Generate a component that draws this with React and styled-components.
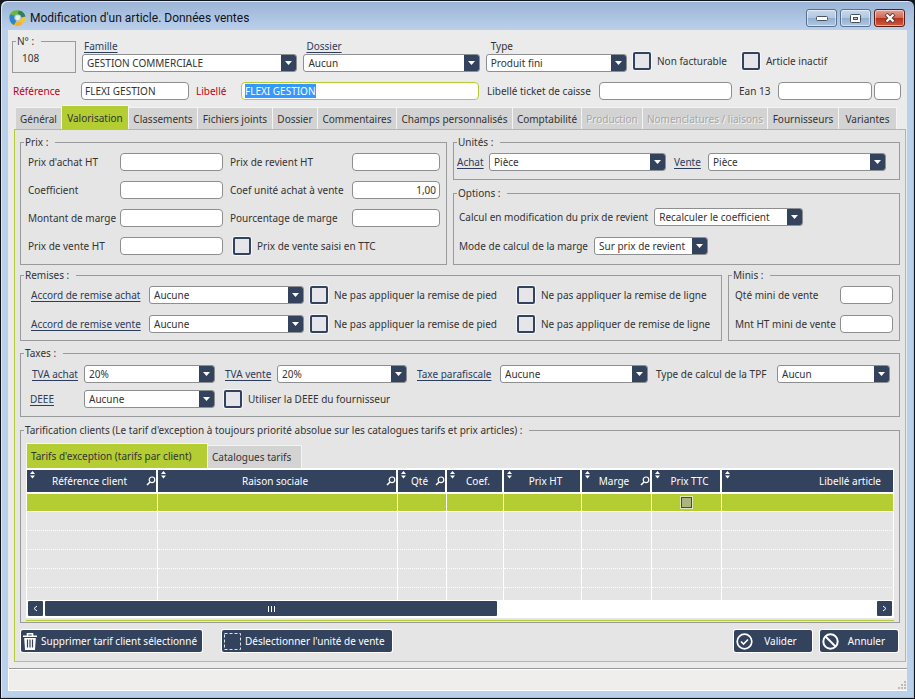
import React, { useEffect, useRef } from 'react';
import styled, { createGlobalStyle, css } from 'styled-components';

const navy = '#33425d';
const green = '#b4cd33';
const ink = '#333333';
const line = '#999a9c';

const GlobalStyle = createGlobalStyle`
  *, *::before, *::after { box-sizing: border-box; }
  body {
    margin: 0;
    background: #16181d;
    color: ${ink};
    font-family: "Noto Sans", "Open Sans", sans-serif;
    font-size: 10px;
    line-height: 14px;
  }
  button, input, select { font: inherit; color: inherit; margin: 0; }
  ::selection { background: #3399ff; color: #ffffff; }
`;

/* ---------- window frame ---------- */

const Window = styled.div`
  display: flex;
  flex-direction: column;
  min-height: 100vh;
  padding: 0 7px 7px;
  border: 1px solid #10131a;
  border-radius: 7px 7px 0 0;
  background: linear-gradient(#9ab4d6 0, #bbd0ea 29px, #bad1ec 60px, #bad1ec 100%);
  box-shadow: inset 1px 1px 0 #dbe9f7, inset -1px -1px 0 #74d4f5;
`;

const TitleBar = styled.header`
  display: flex;
  align-items: center;
  height: 29px;
  padding: 5px 2px 0 1px;
  gap: 3px;
`;

const Title = styled.h1`
  flex: 1;
  margin: 0;
  padding-left: 1px;
  font-family: Roboto, "Noto Sans", sans-serif;
  font-size: 12px;
  font-weight: 400;
  line-height: 16px;
  color: #10131a;
`;

const WindowButton = styled.button`
  display: grid;
  place-items: center;
  width: 31px;
  height: 18px;
  padding: 0;
  border: 1px solid ${p => (p.$close ? '#5f1d17' : '#56708f')};
  border-radius: 3px;
  background: ${p =>
    p.$close
      ? 'linear-gradient(#e2a093 0, #d06a58 48%, #b8321c 52%, #cf5b3c 100%)'
      : 'linear-gradient(#c6d8ec 0, #b2c8e0 48%, #94afcd 52%, #afc8e3 100%)'};
  box-shadow: inset 0 0 0 1px rgba(255, 255, 255, 0.5);
`;

const Client = styled.main`
  flex: 1;
  display: flex;
  flex-direction: column;
  background: #ebebeb;
`;

/* ---------- shared controls ---------- */

const Link = styled.a`
  justify-self: start;
  color: #2c3c5c;
  text-decoration: underline;
  text-underline-offset: 2px;
  white-space: nowrap;
`;

const Label = styled.label`
  padding-left: ${p => p.$pad || 0}px;
  white-space: nowrap;
  color: ${p => (p.$required ? '#c00018' : ink)};
`;

const LinkCell = styled.span`
  padding-left: ${p => p.$pad || 0}px;
  white-space: nowrap;
`;

const TextInput = styled.input`
  width: 100%;
  min-width: 0;
  height: 18px;
  padding: 0 3px;
  border: 1px solid ${p => (p.$active ? green : '#8d8e90')};
  border-radius: 4px;
  background: #ffffff;
  text-align: ${p => (p.$right ? 'right' : 'left')};
  outline: none;
`;

const SelectFrame = styled.span`
  position: relative;
  display: flex;
  min-width: 0;
  height: 18px;
  width: ${p => (p.$width ? `${p.$width}px` : '100%')};
  border: 1px solid #8d8e90;
  border-radius: 3px;
  background: #ffffff;
  overflow: hidden;
`;

const NativeSelect = styled.select`
  flex: 1;
  min-width: 0;
  padding: 0 18px 0 4px;
  border: 0;
  background: transparent;
  appearance: none;
  outline: none;
`;

const SelectArrow = styled.span`
  position: absolute;
  inset: 0 0 0 auto;
  width: 15px;
  display: grid;
  place-items: center;
  background: ${navy};
  pointer-events: none;
`;

const CheckLabel = styled.label`
  display: flex;
  align-items: center;
  gap: 6px;
  height: 18px;
  padding-left: ${p => p.$pad || 0}px;
  white-space: nowrap;
  ${p => p.$span && css`grid-column: span ${p.$span};`}
`;

const CheckInput = styled.input`
  appearance: none;
  flex: none;
  width: 18px;
  height: 18px;
  border: 2px solid ${navy};
  border-radius: 2px;
  background: #e6e6ea;
  box-shadow: 0 0 0 1px #f6f6f8;
`;

const Group = styled.fieldset`
  display: block;
  min-width: 0;
  margin: 0;
  padding: 0;
  border: 1px solid ${line};
`;

const Legend = styled.legend`
  margin-left: 3px;
  padding: 0 7px 0 1px;
  white-space: nowrap;
`;

function Select({ id, value, label, width }) {
  return (
    <SelectFrame $width={width}>
      <NativeSelect id={id} aria-label={label} defaultValue={value}>
        <option>{value}</option>
      </NativeSelect>
      <SelectArrow>
        <svg width="7" height="4" viewBox="0 0 7 4" aria-hidden="true">
          <path d="M0 0h7L3.5 4z" fill="#fff" />
        </svg>
      </SelectArrow>
    </SelectFrame>
  );
}

function Check({ children, pad, span }) {
  return (
    <CheckLabel $pad={pad} $span={span}>
      <CheckInput type="checkbox" />
      {children}
    </CheckLabel>
  );
}

/* ---------- article header ---------- */

const IdentityRow = styled.section`
  display: grid;
  grid-template-columns: 64px 215fr 176fr 141fr 103px 159px;
  column-gap: 6px;
  align-items: end;
  padding: 4px 6px 0 4px;
`;

const NumberGroup = styled(Group)`
  height: 39px;
`;

const NumberValue = styled.output`
  display: block;
  padding: 3px 9px 0;
`;

const StackedField = styled.div`
  display: grid;
  row-gap: 1px;
  padding-bottom: 1px;
`;

const StackedCaption = styled.span`
  padding-left: ${p => p.$pad}px;
`;

const CheckCell = styled.div`
  padding-bottom: 3px;
`;

const NamingRow = styled.section`
  display: grid;
  grid-template-columns: 68px 108px 52px 238fr 120px 133fr 46px 94fr 29px;
  align-items: center;
  padding: 9px 6px 0 5px;
`;

const ShortCell = styled.div`
  padding-left: 2px;
`;

/* ---------- tabs ---------- */

const Tabs = styled.nav`
  display: grid;
  grid-template-columns: 46fr 67fr 69fr 75fr 45fr 79fr 116fr 69fr 61fr 125fr 71fr 58fr;
  align-items: end;
  padding: 5px 10px 0 8px;
`;

const Tab = styled.button`
  min-width: 0;
  height: ${p => (p.$active ? 24 : 22)}px;
  padding: 0;
  border: solid #f4f4f4;
  border-width: 1px 1px 0 0;
  background: ${p => (p.$active ? green : '#d3d3d3')};
  white-space: nowrap;

  &:disabled {
    color: #a6a6a6;
    text-shadow: 1px 1px 0 #f4f4f4;
  }
`;

const Panel = styled.section`
  margin: 0 1px 0 6px;
  padding: 5px 5px 8px;
  border: 1px solid ${green};
  background: #e5e5e5;
`;

/* ---------- panel groups ---------- */

const PricingRow = styled.div`
  display: grid;
  grid-template-columns: 427fr 447fr;
  column-gap: 6px;
`;

const RightStack = styled.div`
  display: grid;
  row-gap: 6px;
`;

const PriceGrid = styled.div`
  display: grid;
  grid-template-columns: 92px 103fr 129px 88fr;
  row-gap: 10px;
  align-items: center;
  padding: 4px 6px 9px 7px;
`;

const UnitGrid = styled.div`
  display: grid;
  grid-template-columns: 32px 177fr 42px 178fr;
  align-items: center;
  padding: 4px 13px 8px 3px;
`;

const OptionList = styled.div`
  display: grid;
  row-gap: 11px;
  padding: 8px 5px 9px;
`;

const OptionRow = styled.div`
  display: flex;
  align-items: center;
  gap: 6px;
`;

const DiscountRow = styled.div`
  display: grid;
  grid-template-columns: minmax(0, 1fr) 172px;
  column-gap: 6px;
  margin-top: 3px;
`;

const DiscountGrid = styled.div`
  display: grid;
  grid-template-columns: 118px 1fr 213px 202px;
  row-gap: 11px;
  align-items: center;
  padding: 4px 2px 7px 10px;
`;

const MinimumGrid = styled.div`
  display: grid;
  grid-template-columns: 105px 1fr;
  row-gap: 11px;
  align-items: center;
  padding: 4px 6px 7px;
`;

const TaxGroup = styled(Group)`
  margin-top: 5px;
`;

const TaxGrid = styled.div`
  display: grid;
  grid-template-columns: 54px 131fr 62px 130fr 93px 148fr 129px 113fr;
  row-gap: 7px;
  align-items: center;
  padding: 5px 9px 8px;
`;

const TariffGroup = styled(Group)`
  margin-top: 6px;
`;

const TariffBody = styled.div`
  padding: 6px 5px 1px;
`;

const SubTabs = styled.div`
  display: flex;
  align-items: flex-end;
`;

const SubTab = styled(Tab)`
  width: ${p => (p.$active ? 182 : 94)}px;
  height: ${p => (p.$active ? 25 : 23)}px;
  padding-left: 4px;
  border-left-width: ${p => (p.$active ? 1 : 0)}px;
  text-align: left;
`;

/* ---------- tariff table ---------- */

const TableFrame = styled.div`
  border: solid #ffffff;
  border-width: 2px 0 0 1px;
  overflow: hidden;
`;

const Table = styled.table`
  width: 100%;
  table-layout: fixed;
  border-collapse: separate;
  border-spacing: 0;
`;

const Column = styled.col`
  ${p => p.$width && css`width: ${p.$width}px;`}
`;

const HeadCell = styled.th`
  position: relative;
  height: 24px;
  padding: 0 ${p => (p.$end ? 12 : p.$search ? 4 : 0)}px 0 ${p => (p.$shift ? 7 : 0)}px;
  border: solid #ffffff;
  border-width: 0 2px 2px 0;
  background: ${navy};
  color: #ffffff;
  font-weight: 400;
  text-align: ${p => (p.$end ? 'right' : 'center')};
  white-space: nowrap;

  &:last-child { border-right-width: 1px; }
`;

const SortMark = styled.svg`
  position: absolute;
  top: 0;
  left: 3px;
`;

const SearchMark = styled.svg`
  position: absolute;
  right: 0;
  top: 6px;
`;

const Cell = styled.td`
  height: ${p => p.$height}px;
  padding: 0;
  border-right: 1px solid #ffffff;
  border-bottom: ${p => (p.$last ? '0' : p.$active ? '1px solid #ffffff' : '1px dotted #ffffff')};
  background: ${p => (p.$active ? green : '#e5e5e5')};
  text-align: center;
  line-height: 0;
`;

const CellCheck = styled.input`
  appearance: none;
  width: 11px;
  height: 11px;
  border: 1px solid #414b55;
  background: #a9b57c;
  box-shadow: 0 0 0 1px #dfe6b8;
`;

const ScrollTrack = styled.div`
  display: flex;
  justify-content: space-between;
  gap: 2px;
  height: 18px;
  padding: 1px 2px 2px 1px;
  background: #ffffff;
`;

const ScrollButton = styled.button`
  display: grid;
  place-items: center;
  width: 15px;
  height: 15px;
  padding: 0;
  border: 0;
  border-radius: 1px;
  background: ${navy};
`;

const ScrollLane = styled.div`
  flex: 1;
`;

const ScrollThumb = styled.div`
  display: grid;
  place-items: center;
  width: 54.4%;
  height: 15px;
  border-radius: 1px;
  background: ${navy};
`;

const GreenRule = styled.div`
  height: 1px;
  margin-top: 2px;
  background: ${green};
`;

/* ---------- actions and status ---------- */

const Actions = styled.footer`
  display: flex;
  align-items: center;
  padding: 6px 2px 0 1px;
`;

const Spacer = styled.div`
  flex: 1;
`;

const ActionButton = styled.button`
  display: flex;
  align-items: center;
  gap: 4px;
  width: ${p => p.$width}px;
  height: 22px;
  margin: 1px 0 1px ${p => p.$before || 0}px;
  padding: 0 2px;
  border: 0;
  border-radius: 2px;
  background: ${navy};
  box-shadow: 0 0 0 1px #ffffff;
  color: #ffffff;
  white-space: nowrap;
`;

const ActionText = styled.span`
  flex: 1;
  text-align: ${p => (p.$center ? 'center' : 'left')};
  padding-right: ${p => (p.$center ? 6 : 0)}px;
`;

const StatusBar = styled.div`
  flex: 1;
  display: flex;
  justify-content: flex-end;
  align-items: flex-end;
  min-height: 23px;
  margin-top: 6px;
  border: solid #ffffff;
  border-width: 0 0 1px 1px;
  background: #f0eded;
  box-shadow: inset 0 1px 0 #98989a, inset 0 2px 0 #ffffff;
`;

/* ---------- drawings ---------- */

function Logo() {
  return (
    <svg width="17" height="18" viewBox="0 0 18 18" aria-hidden="true">
      <path d="M1 6C2 2 6 0 10 1L12 6C9 4 7 5 6 7z" fill="#6fb43f" />
      <path d="M10 1c4 0 7 3 7.500 7L13 9.500C13.500 7 12 5 9.500 5z" fill="#2f7f5a" />
      <path d="M17.500 7.500c.5 4-2 7-5.500 8.500L8.500 12.500c3 0 4.500-2 4.500-4z" fill="#f2c62d" />
      <path d="M14 15c-3 3-7 3-10 1l2-5c1 2 3 2.500 5 1.500z" fill="#f0b030" />
      <path d="M5 16.500C1 14.500-.500 10 1 5l5 1.500C5 8.500 5.500 11 8 12z" fill="#2b86c8" />
      <circle cx="9.300" cy="8.700" r="2.600" fill="#e6f1e2" />
    </svg>
  );
}

function TrashIcon() {
  return (
    <svg width="14" height="17" viewBox="0 0 14 17" aria-hidden="true">
      <path d="M4.500 2.500V.8h5v1.700M0 3.200h14" fill="none" stroke="#fff" strokeWidth="1.600" />
      <path d="M1.200 5h11.600l-.8 12H2z" fill="#fff" />
      <path d="M4.500 6.500v8M7 6.500v8M9.500 6.500v8" stroke={navy} strokeWidth="1.200" />
    </svg>
  );
}

function DashedSquareIcon() {
  return (
    <svg width="17" height="17" viewBox="0 0 17 17" aria-hidden="true">
      <rect x=".5" y=".5" width="16" height="16" fill="none" stroke="#dfe4ec" strokeDasharray="3 2" />
    </svg>
  );
}

function ValidateIcon() {
  return (
    <svg width="17" height="17" viewBox="0 0 17 17" aria-hidden="true">
      <circle cx="8.500" cy="8.500" r="7.300" fill="none" stroke="#fff" strokeWidth="1.700" />
      <path d="M5 8.500l2.500 2.500L12 6.500" fill="none" stroke="#fff" strokeWidth="1.600" />
    </svg>
  );
}

function CancelIcon() {
  return (
    <svg width="17" height="17" viewBox="0 0 17 17" aria-hidden="true">
      <circle cx="8.500" cy="8.500" r="7.200" fill="none" stroke="#fff" strokeWidth="2" />
      <path d="M3.500 3.500l10 10" stroke="#fff" strokeWidth="2" />
    </svg>
  );
}

/* ---------- data ---------- */

const tabs = [
  ['Général'], ['Valorisation', 'active'], ['Classements'], ['Fichiers joints'], ['Dossier'],
  ['Commentaires'], ['Champs personnalisés'], ['Comptabilité'], ['Production', 'disabled'],
  ['Nomenclatures / liaisons', 'disabled'], ['Fournisseurs'], ['Variantes'],
];

const columns = [
  { name: 'Référence client', width: 131, search: true },
  { name: 'Raison sociale', width: 240, search: true },
  { name: 'Qté', width: 49, search: true },
  { name: 'Coef.', width: 57, shift: true },
  { name: 'Prix HT', width: 78, shift: true },
  { name: 'Marge', width: 70, search: true },
  { name: 'Prix TTC', width: 70, shift: true },
  { name: 'Libellé article', end: true },
];

const emptyRows = [19, 19, 19, 19, 12];

const prices = [
  ["Prix d'achat HT", 'Prix de revient HT', ''],
  ['Coefficient', 'Coef unité achat à vente', '1,00'],
  ['Montant de marge', 'Pourcentage de marge', ''],
];

function TariffTable() {
  return (
    <TableFrame>
      <Table>
        <colgroup>
          {columns.map(c => <Column key={c.name} $width={c.width} />)}
        </colgroup>
        <thead>
          <tr>
            {columns.map(c => (
              <HeadCell key={c.name} scope="col" $end={c.end} $shift={c.shift} $search={c.search}>
                <SortMark width="5" height="9" viewBox="0 0 5 9" aria-hidden="true">
                  <path d="M0 4l2.500-3L5 4zM0 5.500h5L2.500 8.500z" fill="#fff" />
                </SortMark>
                {c.name}
                {c.search && (
                  <SearchMark width="10" height="10" viewBox="0 0 10 10" aria-hidden="true">
                    <circle cx="6" cy="3.800" r="2.800" fill="none" stroke="#fff" strokeWidth="1.200" />
                    <path d="M4 6L1 9" stroke="#fff" strokeWidth="1.600" />
                  </SearchMark>
                )}
              </HeadCell>
            ))}
          </tr>
        </thead>
        <tbody>
          <tr>
            {columns.map(c => (
              <Cell key={c.name} $active $height={18}>
                {c.name === 'Prix TTC' && <CellCheck type="checkbox" aria-label="Prix TTC" />}
              </Cell>
            ))}
          </tr>
          {emptyRows.map((height, i) => (
            <tr key={i}>
              {columns.map(c => (
                <Cell key={c.name} $height={height} $last={i === emptyRows.length - 1} />
              ))}
            </tr>
          ))}
        </tbody>
      </Table>
      <ScrollTrack>
        <ScrollButton aria-label="Défiler à gauche">
          <svg width="5" height="7" viewBox="0 0 5 7" aria-hidden="true">
            <path d="M4 1L1 3.500 4 6" fill="none" stroke="#fff" />
          </svg>
        </ScrollButton>
        <ScrollLane>
          <ScrollThumb>
            <svg width="8" height="6" viewBox="0 0 8 6" aria-hidden="true">
              <path d="M1.500 0v6M4.500 0v6M7.500 0v6" stroke="#fff" />
            </svg>
          </ScrollThumb>
        </ScrollLane>
        <ScrollButton aria-label="Défiler à droite">
          <svg width="5" height="7" viewBox="0 0 5 7" aria-hidden="true">
            <path d="M1 1l3 2.500L1 6" fill="none" stroke="#fff" />
          </svg>
        </ScrollButton>
      </ScrollTrack>
    </TableFrame>
  );
}

export default function App() {
  const labelInput = useRef(null);

  useEffect(() => {
    labelInput.current.focus({ preventScroll: true });
    labelInput.current.select();
  }, []);

  return (
    <>
      <GlobalStyle />
      <Window>
        <TitleBar>
          <Logo />
          <Title>Modification d'un article. Données ventes</Title>
          <WindowButton aria-label="Réduire">
            <svg width="12" height="6" viewBox="0 0 12 6" aria-hidden="true">
              <rect x=".5" y="1.500" width="11" height="4" rx="1" fill="#fff" stroke="#48525f" />
            </svg>
          </WindowButton>
          <WindowButton aria-label="Agrandir">
            <svg width="11" height="9" viewBox="0 0 11 9" aria-hidden="true">
              <rect x=".5" y=".5" width="10" height="8" rx="1" fill="#fff" stroke="#48525f" />
              <rect x="3.500" y="3.500" width="4" height="2" fill="#b2c8e0" stroke="#48525f" />
            </svg>
          </WindowButton>
          <WindowButton $close aria-label="Fermer">
            <svg width="12" height="10" viewBox="0 0 12 10" aria-hidden="true">
              <path d="M2 1l8 8M10 1L2 9" stroke="#5c3a38" strokeWidth="4" />
              <path d="M2.500 1.500l7 7M9.500 1.500l-7 7" stroke="#fff" strokeWidth="2.200" />
            </svg>
          </WindowButton>
        </TitleBar>

        <Client>
          <IdentityRow>
            <NumberGroup>
              <Legend>N° :</Legend>
              <NumberValue>108</NumberValue>
            </NumberGroup>
            <StackedField>
              <StackedCaption $pad={2}><Link href="#famille">Famille</Link></StackedCaption>
              <Select label="Famille" value="GESTION COMMERCIALE" />
            </StackedField>
            <StackedField>
              <StackedCaption $pad={3}><Link href="#dossier">Dossier</Link></StackedCaption>
              <Select label="Dossier" value="Aucun" />
            </StackedField>
            <StackedField>
              <Label htmlFor="type" $pad={5}>Type</Label>
              <Select id="type" value="Produit fini" />
            </StackedField>
            <CheckCell><Check>Non facturable</Check></CheckCell>
            <CheckCell><Check>Article inactif</Check></CheckCell>
          </IdentityRow>

          <NamingRow>
            <Label htmlFor="reference" $required>Référence</Label>
            <TextInput id="reference" defaultValue="FLEXI GESTION" />
            <Label htmlFor="libelle" $required $pad={7}>Libellé</Label>
            <TextInput id="libelle" ref={labelInput} defaultValue="FLEXI GESTION" $active />
            <Label htmlFor="ticket" $pad={8}>Libellé ticket de caisse</Label>
            <TextInput id="ticket" />
            <Label htmlFor="ean" $pad={7}>Ean 13</Label>
            <TextInput id="ean" />
            <ShortCell><TextInput aria-label="Ean 13, complément" /></ShortCell>
          </NamingRow>

          <Tabs>
            {tabs.map(([name, state]) => (
              <Tab key={name} $active={state === 'active'} disabled={state === 'disabled'}>{name}</Tab>
            ))}
          </Tabs>

          <Panel>
            <PricingRow>
              <Group>
                <Legend>Prix :</Legend>
                <PriceGrid>
                  {prices.map(([left, right, value]) => (
                    <React.Fragment key={left}>
                      <Label htmlFor={left}>{left}</Label>
                      <TextInput id={left} $right />
                      <Label htmlFor={right} $pad={7}>{right}</Label>
                      <TextInput id={right} defaultValue={value} $right />
                    </React.Fragment>
                  ))}
                  <Label htmlFor="vente-ht">Prix de vente HT</Label>
                  <TextInput id="vente-ht" $right />
                  <Check pad={10} span={2}>Prix de vente saisi en TTC</Check>
                </PriceGrid>
              </Group>
              <RightStack>
                <Group>
                  <Legend>Unités :</Legend>
                  <UnitGrid>
                    <Link href="#unite-achat">Achat</Link>
                    <Select label="Unité d'achat" value="Pièce" />
                    <LinkCell $pad={8}><Link href="#unite-vente">Vente</Link></LinkCell>
                    <Select label="Unité de vente" value="Pièce" />
                  </UnitGrid>
                </Group>
                <Group>
                  <Legend>Options :</Legend>
                  <OptionList>
                    <OptionRow>
                      <Label htmlFor="calcul-revient">Calcul en modification du prix de revient</Label>
                      <Select id="calcul-revient" value="Recalculer le coefficient" width={149} />
                    </OptionRow>
                    <OptionRow>
                      <Label htmlFor="calcul-marge">Mode de calcul de la marge</Label>
                      <Select id="calcul-marge" value="Sur prix de revient" width={114} />
                    </OptionRow>
                  </OptionList>
                </Group>
              </RightStack>
            </PricingRow>

            <DiscountRow>
              <Group>
                <Legend>Remises :</Legend>
                <DiscountGrid>
                  <Link href="#remise-achat">Accord de remise achat</Link>
                  <Select label="Accord de remise achat" value="Aucune" />
                  <Check pad={6}>Ne pas appliquer la remise de pied</Check>
                  <Check>Ne pas appliquer la remise de ligne</Check>
                  <Link href="#remise-vente">Accord de remise vente</Link>
                  <Select label="Accord de remise vente" value="Aucune" />
                  <Check pad={6}>Ne pas appliquer la remise de pied</Check>
                  <Check>Ne pas appliquer de remise de ligne</Check>
                </DiscountGrid>
              </Group>
              <Group>
                <Legend>Minis :</Legend>
                <MinimumGrid>
                  <Label htmlFor="mini-qte">Qté mini de vente</Label>
                  <TextInput id="mini-qte" $right />
                  <Label htmlFor="mini-ht">Mnt HT mini de vente</Label>
                  <TextInput id="mini-ht" $right />
                </MinimumGrid>
              </Group>
            </DiscountRow>

            <TaxGroup>
              <Legend>Taxes :</Legend>
              <TaxGrid>
                <LinkCell $pad={2}><Link href="#tva-achat">TVA achat</Link></LinkCell>
                <Select label="TVA achat" value="20%" />
                <LinkCell $pad={10}><Link href="#tva-vente">TVA vente</Link></LinkCell>
                <Select label="TVA vente" value="20%" />
                <LinkCell $pad={10}><Link href="#taxe-parafiscale">Taxe parafiscale</Link></LinkCell>
                <Select label="Taxe parafiscale" value="Aucune" />
                <Label htmlFor="tpf" $pad={8}>Type de calcul de la TPF</Label>
                <Select id="tpf" value="Aucun" />
                <Link href="#deee">DEEE</Link>
                <Select label="DEEE" value="Aucune" />
                <Check pad={9} span={3}>Utiliser la DEEE du fournisseur</Check>
              </TaxGrid>
            </TaxGroup>

            <TariffGroup>
              <Legend>
                Tarification clients (Le tarif d'exception à toujours priorité absolue sur les catalogues tarifs et prix articles) :
              </Legend>
              <TariffBody>
                <SubTabs>
                  <SubTab $active>Tarifs d'exception (tarifs par client)</SubTab>
                  <SubTab>Catalogues tarifs</SubTab>
                </SubTabs>
                <TariffTable />
                <GreenRule />
              </TariffBody>
            </TariffGroup>

            <Actions>
              <ActionButton $width={181}>
                <TrashIcon />
                <ActionText>Supprimer tarif client sélectionné</ActionText>
              </ActionButton>
              <ActionButton $width={170} $before={20}>
                <DashedSquareIcon />
                <ActionText>Déslectionner l'unité de vente</ActionText>
              </ActionButton>
              <Spacer />
              <ActionButton $width={78}>
                <ValidateIcon />
                <ActionText $center>Valider</ActionText>
              </ActionButton>
              <ActionButton $width={78} $before={8}>
                <CancelIcon />
                <ActionText $center>Annuler</ActionText>
              </ActionButton>
            </Actions>
          </Panel>

          <StatusBar>
            <svg width="9" height="9" viewBox="0 0 9 9" aria-hidden="true">
              <path
                d="M6 0h2v2H6zM3 3h2v2H3zM6 3h2v2H6zM0 6h2v2H0zM3 6h2v2H3zM6 6h2v2H6z"
                fill="#bcbabc"
              />
            </svg>
          </StatusBar>
        </Client>
      </Window>
    </>
  );
}
